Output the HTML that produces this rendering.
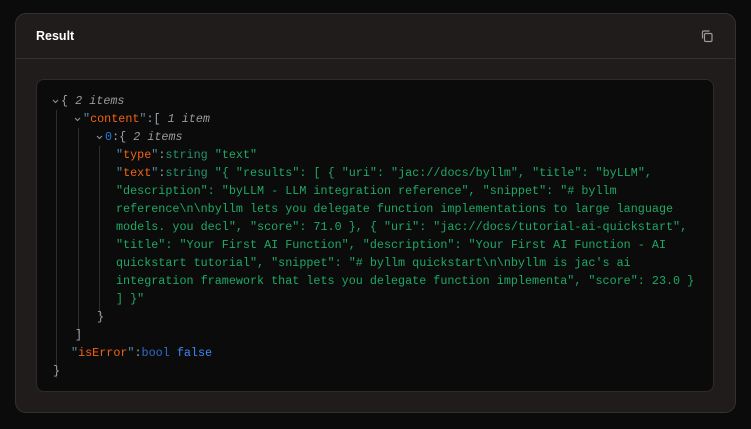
<!DOCTYPE html>
<html><head><style>
*{margin:0;padding:0;box-sizing:border-box}
body{width:751px;height:429px;background:#0b0b0b;position:relative;overflow:hidden;font-family:"Liberation Sans",sans-serif}
.card{position:absolute;left:15px;top:13px;width:721px;height:400px;background:#1f1c1b;border:1px solid #34302e;border-radius:11px}
.hdr{position:absolute;left:0;top:0;right:0;height:45px;border-bottom:1px solid #35312f}
.title{position:absolute;left:20px;top:15px;color:#fff;font-weight:bold;font-size:12.5px}
.copy{position:absolute;left:684px;top:15px}
.box{position:absolute;left:36px;top:79px;width:678px;height:313px;background:#0b0b0b;border:1px solid #2f2b29;border-radius:8px}
.l{position:absolute;font-family:"Liberation Mono",monospace;font-size:11.75px;white-space:pre;line-height:18px;color:#9aa3ab}
.k{color:#f06414}.q{color:#5b8ca0}.s{color:#1fa865}.t{color:#22956a}.i{color:#9a9a9a;font-style:italic}.b{color:#2f6bcc}.f{color:#3d86f5}.n{color:#2a7ad8}
.g{position:absolute;width:1px;background:#2e2e2e}
.cv{position:absolute}
</style></head><body>
<div class="card">
<div class="hdr"></div>
<div class="title">Result</div>
<svg class="copy" width="14" height="14" viewBox="0 0 14 14" fill="none" stroke="#9a9a9a" stroke-width="1.2"><rect x="4.5" y="4.5" width="7.5" height="8" rx="1.2"/><path d="M2.5 9.5V3a1 1 0 0 1 1-1h6"/></svg>
</div>
<div class="box"></div>
<div class="g" style="left:56px;top:110px;height:268px"></div>
<div class="g" style="left:78px;top:128px;height:206px"></div>
<div class="g" style="left:99px;top:146px;height:170px"></div>
<svg class="cv" style="left:52px;top:99px" width="7" height="5" viewBox="0 0 7 5"><path d="M1 1l2.5 2.5L6 1" stroke="#8a929a" stroke-width="1.1" fill="none"/></svg>
<svg class="cv" style="left:74px;top:117px" width="7" height="5" viewBox="0 0 7 5"><path d="M1 1l2.5 2.5L6 1" stroke="#8a929a" stroke-width="1.1" fill="none"/></svg>
<svg class="cv" style="left:96px;top:135px" width="7" height="5" viewBox="0 0 7 5"><path d="M1 1l2.5 2.5L6 1" stroke="#8a929a" stroke-width="1.1" fill="none"/></svg>
<div class="l" style="left:61px;top:92px">{ <span class="i">2 items</span></div>
<div class="l" style="left:83px;top:110px"><span class="q">"</span><span class="k">content</span><span class="q">"</span>:[ <span class="i">1 item</span></div>
<div class="l" style="left:105px;top:128px"><span class="n">0</span>:{ <span class="i">2 items</span></div>
<div class="l" style="left:116px;top:146px"><span class="q">"</span><span class="k">type</span><span class="q">"</span>:<span class="t">string</span> <span class="s">"text"</span></div>
<div class="l" style="left:116px;top:164px"><span class="q">"</span><span class="k">text</span><span class="q">"</span>:<span class="t">string</span> <span class="s">"{ "results": [ { "uri": "jac://docs/byllm", "title": "byLLM",</span></div>
<div class="l s" style="left:116px;top:182px">"description": "byLLM - LLM integration reference", "snippet": "# byllm</div>
<div class="l s" style="left:116px;top:200px">reference\n\nbyllm lets you delegate function implementations to large language</div>
<div class="l s" style="left:116px;top:218px">models. you decl", "score": 71.0 }, { "uri": "jac://docs/tutorial-ai-quickstart",</div>
<div class="l s" style="left:116px;top:236px">"title": "Your First AI Function", "description": "Your First AI Function - AI</div>
<div class="l s" style="left:116px;top:254px">quickstart tutorial", "snippet": "# byllm quickstart\n\nbyllm is jac's ai</div>
<div class="l s" style="left:116px;top:272px">integration framework that lets you delegate function implementa", "score": 23.0 }</div>
<div class="l s" style="left:116px;top:290px">] }"</div>
<div class="l" style="left:97px;top:308px">}</div>
<div class="l" style="left:75px;top:326px">]</div>
<div class="l" style="left:71px;top:344px"><span class="q">"</span><span class="k">isError</span><span class="q">"</span>:<span class="b">bool</span> <span class="f">false</span></div>
<div class="l" style="left:53px;top:362px">}</div>
</body></html>
